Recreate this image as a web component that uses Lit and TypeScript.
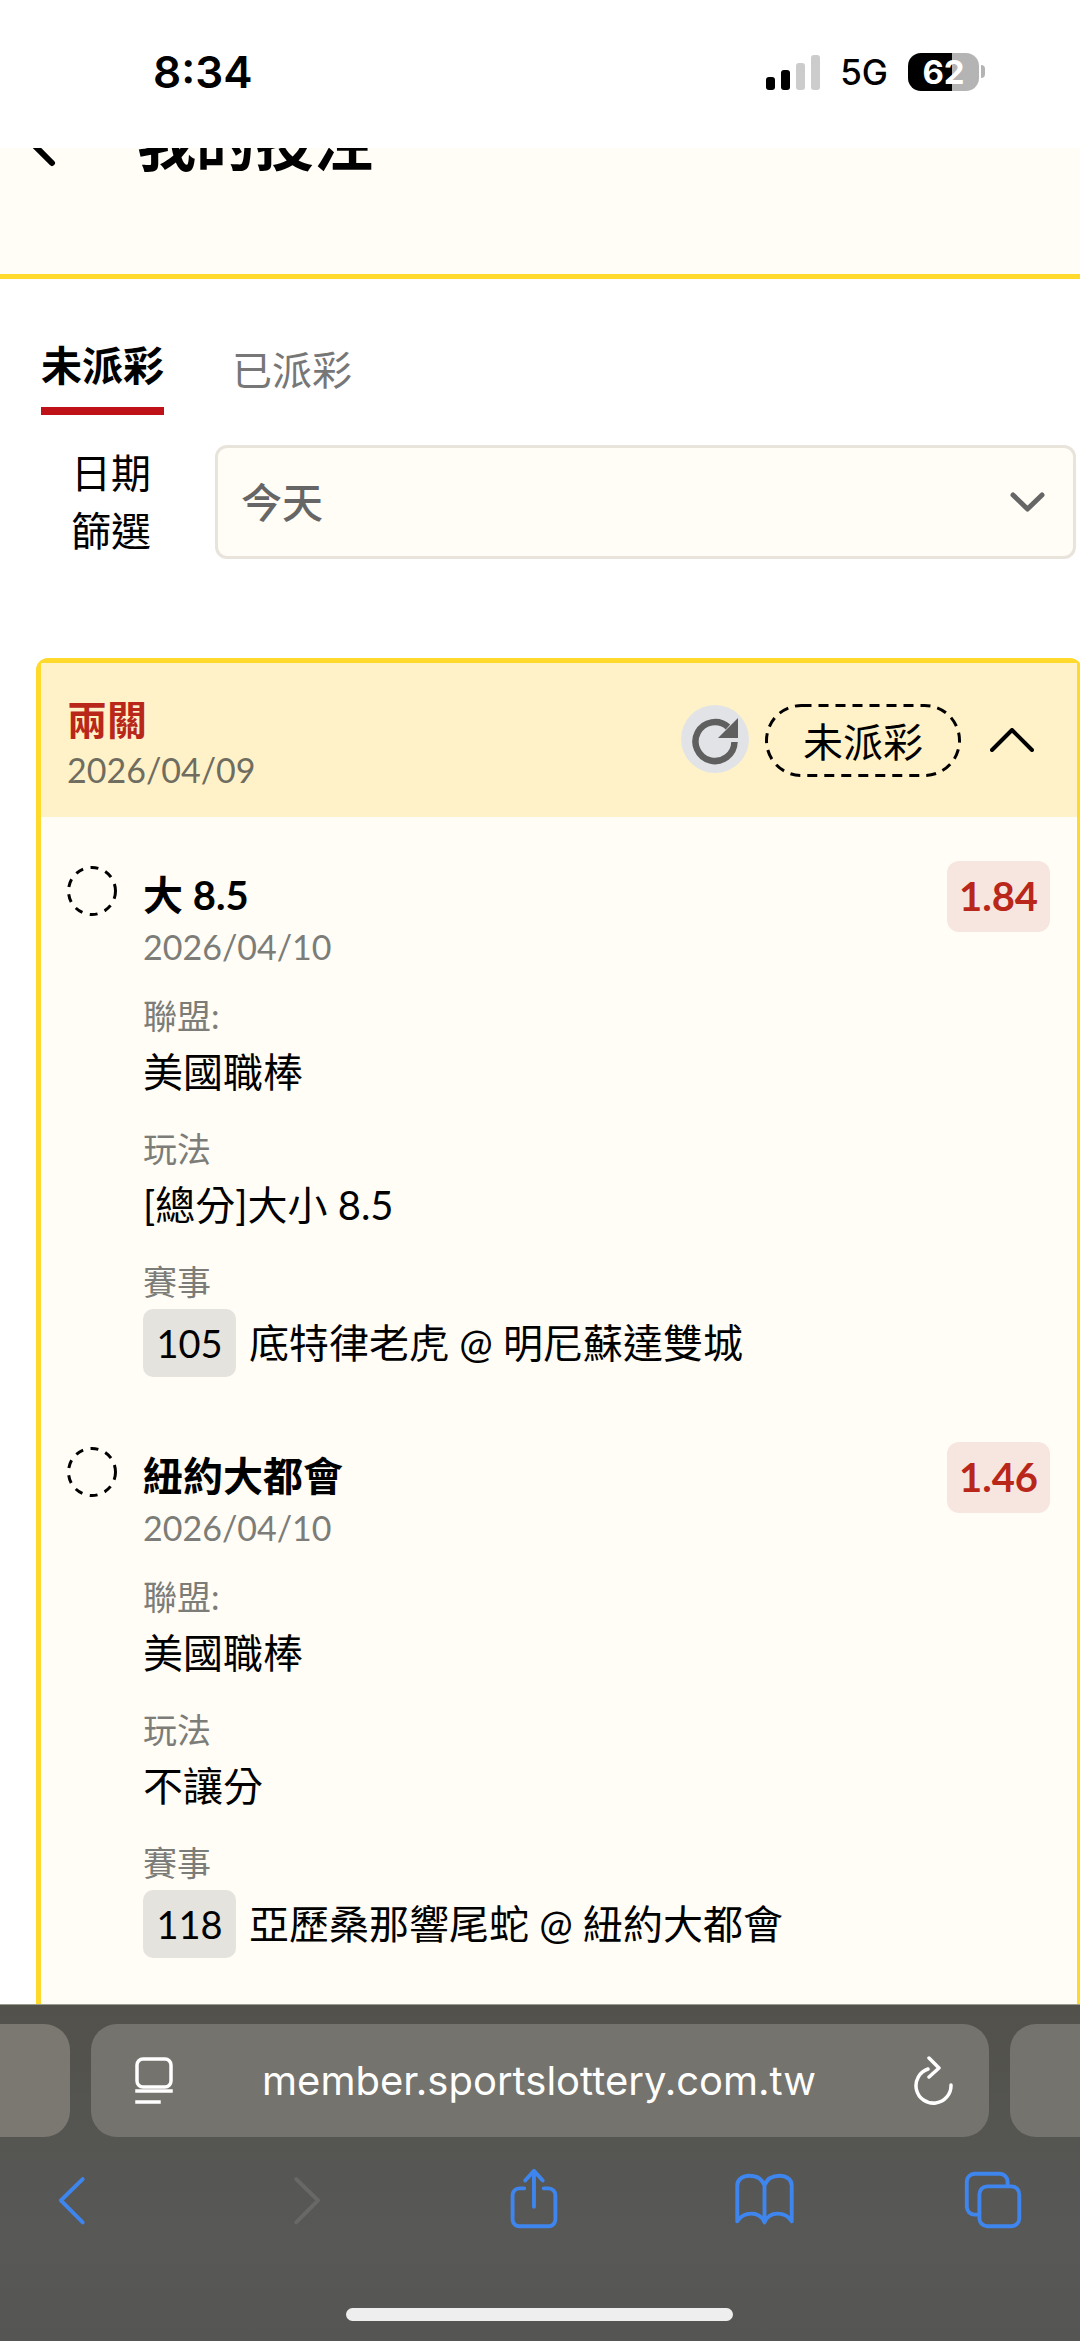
import { LitElement, html, css, svg } from "lit";
import { customElement } from "lit/decorators.js";

interface Bet {
  title: string;
  date: string;
  odds: string;
  league: string;
  play: string;
  code: string;
  match: string;
}

const BETS: Bet[] = [
  { title: "大 8.5", date: "2026/04/10", odds: "1.84", league: "美國職棒", play: "[總分]大小 8.5", code: "105", match: "底特律老虎 @ 明尼蘇達雙城" },
  { title: "紐約大都會", date: "2026/04/10", odds: "1.46", league: "美國職棒", play: "不讓分", code: "118", match: "亞歷桑那響尾蛇 @ 紐約大都會" },
];

const TOOL_ICONS = [
  svg`<path d="M47 13.5 L24.5 35.5 L47 58" />`,
  svg`<path class="dim" d="M29 13.5 L51.5 35.5 L29 58" />`,
  svg`<path d="M27 23 H22 a7 7 0 0 0 -7 7 V55 a7 7 0 0 0 7 7 H52 a7 7 0 0 0 7 -7 V30 a7 7 0 0 0 -7 -7 H47 M37 5 V42 M28 15 L37 5 L46 15" />`,
  svg`<path d="M36.5 20 C34 13 28 10 21 10 C14 10 8.500 14 8.500 20 V57 C12 51 18 49 23 49 C29 49 34 52 36.5 58 C39 52 44 49 50 49 C55 49 61 51 64.500 57 V20 C64.500 14 59 10 52 10 C45 10 39 13 36.5 20 Z M36.5 20 V58" />`,
  svg`<path d="M50 20 V16 a8 8 0 0 0 -8 -8 H16 a8 8 0 0 0 -8 8 V42 a8 8 0 0 0 8 8 H21 M29 21 H54 a8 8 0 0 1 8 8 V54 a8 8 0 0 1 -8 8 H29 a8 8 0 0 1 -8 -8 V29 a8 8 0 0 1 8 -8 Z" />`,
];

@customElement("app-root")
export class AppRoot extends LitElement {
  static styles = css`
    :host {
      display: block;
      position: relative;
      width: 1080px;
      height: 2341px;
      overflow: hidden;
      background: #fff;
      color: #000;
      font-family: Lato, "Noto Sans CJK TC", sans-serif;
    }
    .status {
      display: flex;
      align-items: center;
      justify-content: space-between;
      height: 148px;
      padding: 0 101px 4px 153px;
      box-sizing: border-box;
      font-family: Inter, "Liberation Sans", sans-serif;
    }
    .time { font-size: 44px; font-weight: 600; line-height: 50px; }
    .status-right { display: flex; align-items: center; }
    .net { font-size: 35px; font-weight: 500; margin: 0 20px; line-height: 40px; }
    .battery {
      position: relative;
      width: 71px;
      height: 38px;
      border-radius: 13px;
      background: linear-gradient(90deg, #000 62%, #b4b4b4 62%);
      color: #fff;
      font-size: 33px;
      font-weight: 700;
      line-height: 38px;
      text-align: center;
    }
    .battery::after {
      content: "";
      position: absolute;
      right: -6px;
      top: 12px;
      width: 4px;
      height: 13px;
      border-radius: 0 4px 4px 0;
      background: #b4b4b4;
    }
    .page-head {
      display: flex;
      align-items: flex-start;
      height: 126px;
      overflow: hidden;
      background: #fffdf6;
      border-bottom: 5px solid #ffd92b;
    }
    .page-head svg { flex: none; margin: -31px 0 0 26px; }
    .page-title { font-size: 59px; font-weight: 700; line-height: 70px; margin: -39px 0 0 81px; }
    .tabs { display: flex; align-items: flex-end; gap: 68px; padding: 59px 0 0 41px; }
    .tab { font-size: 40px; line-height: 56px; color: #777; padding-bottom: 17px; }
    .tab.active { font-size: 41px; color: #000; font-weight: 700; padding-bottom: 13px; border-bottom: 8px solid #be1218; }
    .filter { display: flex; align-items: center; height: 114px; margin: 30px 4px 0 0; }
    .filter-label { flex: none; width: 144px; padding-left: 71px; font-size: 40px; line-height: 58px; }
    .select {
      flex: 1;
      display: flex;
      align-items: center;
      justify-content: space-between;
      height: 114px;
      box-sizing: border-box;
      padding: 0 28px 0 23px;
      background: #fffdf6;
      border: 3px solid #e8e4dc;
      border-radius: 12px;
      font-size: 41px;
      font-weight: 500;
      color: #666;
    }
    .select span { margin-bottom: 4px; }
    .card {
      margin: 99px -2px 0 36px;
      border: 5px solid #ffd92b;
      border-radius: 12px;
      background: #fffdf6;
    }
    .card-head {
      display: flex;
      align-items: center;
      justify-content: space-between;
      height: 154px;
      padding: 0 43px 0 26px;
      background: #fff2c8;
    }
    .card-meta { margin-top: 10px; }
    .card-name { font-size: 40px; font-weight: 700; line-height: 50px; color: #b9271b; }
    .card-date { font-size: 34px; line-height: 50px; color: #6f6c60; }
    .card-tools { display: flex; align-items: center; }
    .refresh { display: block; width: 68px; height: 68px; border-radius: 50%; background: #e2e3e6; margin: -2px 16px 0 0; }
    .state {
      position: relative;
      width: 196px;
      height: 73px;
      display: flex;
      align-items: center;
      justify-content: center;
      font-size: 40px;
      margin-right: 29px;
    }
    .state svg { position: absolute; left: 0; top: 0; }
    .card-body { padding: 44px 27px 0 26px; }
    .bet { display: flex; margin-bottom: 65px; }
    .pending { flex: none; display: block; margin: 5px 26px 0 0; }
    .bet-main { flex: 1; padding-top: 9px; }
    .bet-title { font-size: 40px; font-weight: 700; line-height: 50px; }
    .bet-date { font-size: 34px; line-height: 46px; color: #7c7c78; margin: 4px 0 24px; }
    .odds {
      flex: none;
      width: 103px;
      height: 71px;
      border-radius: 12px;
      background: #f7e6e0;
      color: #b9271b;
      font-size: 40px;
      font-weight: 700;
      line-height: 71px;
      text-align: center;
    }
    .label { font-size: 34px; line-height: 44px; color: #7c7c78; }
    .value { font-size: 40px; line-height: 50px; margin: 9px 0 30px; }
    .match { display: flex; align-items: center; margin-top: 5px; font-size: 40px; line-height: 50px; }
    .code {
      width: 93px;
      height: 68px;
      margin-right: 13px;
      border-radius: 10px;
      background: #e5e3dd;
      font-size: 38px;
      line-height: 68px;
      text-align: center;
    }
    .chrome {
      position: absolute;
      left: 0;
      right: 0;
      top: 2004px;
      height: 337px;
      overflow: hidden;
      box-sizing: border-box;
      border-top: 1px solid #9c9b90;
      background: linear-gradient(#52514b, #555552 40%, #585857 70%, #555553);
    }
    .bars { display: flex; gap: 21px; margin-top: 19px; }
    .side { flex: none; width: 70px; height: 113px; background: #7a7871; border-radius: 0 26px 26px 0; }
    .side.right { width: 80px; background: #74736d; border-radius: 26px 0 0 26px; }
    .url {
      flex: none;
      display: flex;
      align-items: center;
      justify-content: space-between;
      box-sizing: border-box;
      width: 898px;
      height: 113px;
      padding: 0 35px 0 44px;
      background: #74736d;
      border-radius: 26px;
      color: #fff;
      font-family: Inter, "Liberation Sans", sans-serif;
      font-size: 40px;
    }
    .url span { margin-right: 9px; }
    .tools { display: flex; justify-content: space-between; padding: 28px 51px 0 37px; }
    .tools svg { display: block; fill: none; stroke: #3e85ee; stroke-width: 4; stroke-linecap: round; stroke-linejoin: round; }
    .tools .dim { stroke: #686866; }
    .home { width: 387px; height: 13px; margin: 73px 0 0 346px; border-radius: 7px; background: #eeeeee; }
  `;

  private renderBet(b: Bet) {
    return html`
      <div class="bet">
        <svg class="pending" width="50" height="50" viewBox="0 0 50 50" fill="none" stroke="#000" stroke-width="3" stroke-dasharray="8 7.500">
          <circle cx="25" cy="25" r="23.500" />
        </svg>
        <div class="bet-main">
          <div class="bet-title">${b.title}</div>
          <div class="bet-date">${b.date}</div>
          <div class="label">聯盟:</div>
          <div class="value">${b.league}</div>
          <div class="label">玩法</div>
          <div class="value">${b.play}</div>
          <div class="label">賽事</div>
          <div class="match"><span class="code">${b.code}</span><span>${b.match}</span></div>
        </div>
        <div class="odds">${b.odds}</div>
      </div>
    `;
  }

  render() {
    return html`
      <div class="status">
        <div class="time">8:34</div>
        <div class="status-right">
          <svg width="54" height="35" viewBox="0 0 54 35">
            <rect x="0" y="22" width="9" height="13" rx="3" fill="#000" />
            <rect x="15" y="15" width="9" height="20" rx="3" fill="#000" />
            <rect x="30" y="8" width="9" height="27" rx="3" fill="#ccc" />
            <rect x="45" y="0" width="9" height="35" rx="3" fill="#ccc" />
          </svg>
          <div class="net">5G</div>
          <div class="battery">62</div>
        </div>
      </div>

      <div class="page-head">
        <svg width="30" height="52" viewBox="0 0 30 52" fill="none" stroke="#000" stroke-width="6" stroke-linecap="round">
          <path d="M26 4 L6 26 L26 46" />
        </svg>
        <div class="page-title">我的投注</div>
      </div>

      <div class="tabs">
        <div class="tab active">未派彩</div>
        <div class="tab">已派彩</div>
      </div>

      <div class="filter">
        <div class="filter-label">日期<br />篩選</div>
        <div class="select">
          <span>今天</span>
          <svg width="35" height="20" viewBox="0 0 35 20" fill="none" stroke="#666" stroke-width="5" stroke-linecap="round" stroke-linejoin="round">
            <path d="M3 3 L17.500 17 L32 3" />
          </svg>
        </div>
      </div>

      <div class="card">
        <div class="card-head">
          <div class="card-meta">
            <div class="card-name">兩關</div>
            <div class="card-date">2026/04/09</div>
          </div>
          <div class="card-tools">
            <svg class="refresh" viewBox="0 0 68 68">
              <path d="M47 22 A19.500 19.500 0 1 0 53.500 37" fill="none" stroke="#5f5f5f" stroke-width="6.500" />
              <path d="M57 13 V33 H37 Z" fill="#5f5f5f" />
            </svg>
            <div class="state">
              <svg width="196" height="73" viewBox="0 0 196 73" fill="none" stroke="#000" stroke-width="3" stroke-dasharray="10 7">
                <rect x="1.500" y="1.500" width="193" height="70" rx="35" />
              </svg>
              <span>未派彩</span>
            </div>
            <svg width="44" height="24" viewBox="0 0 44 24" fill="none" stroke="#000" stroke-width="4" stroke-linecap="round" stroke-linejoin="round">
              <path d="M2 22 L22 2 L42 22" />
            </svg>
          </div>
        </div>
        <div class="card-body">${BETS.map((b) => this.renderBet(b))}</div>
      </div>

      <div class="chrome">
        <div class="bars">
          <div class="side"></div>
          <div class="url">
            <svg width="38" height="48" viewBox="0 0 38 48" fill="none" stroke="#fff" stroke-width="3.500" stroke-linecap="square">
              <rect x="2" y="2" width="34" height="28" rx="6" />
              <path d="M2 34 H36 M2 45 H24" />
            </svg>
            <span>member.sportslottery.com.tw</span>
            <svg width="40" height="50" viewBox="0 0 40 50" fill="none" stroke="#fff" stroke-width="3.500" stroke-linecap="round" stroke-linejoin="round">
              <path d="M14 13 A17.500 17.500 0 1 0 37 29" />
              <path d="M15 2 L25 12 L15 21" />
            </svg>
          </div>
          <div class="side right"></div>
        </div>
        <div class="tools">
          ${TOOL_ICONS.map((icon) => html`<svg width="70" height="70" viewBox="0 0 72 70">${icon}</svg>`)}
        </div>
        <div class="home"></div>
      </div>
    `;
  }
}
